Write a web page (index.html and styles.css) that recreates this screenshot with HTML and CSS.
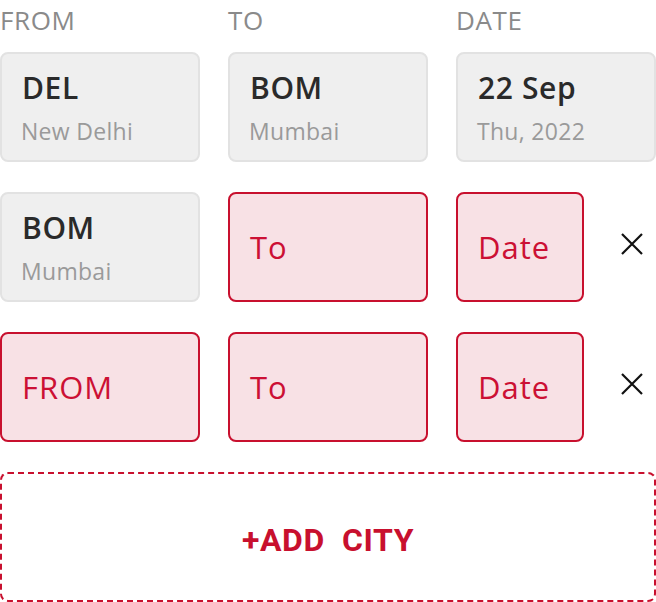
FILE: index.html
```html
<!DOCTYPE html>
<html lang="en">
<head>
    <meta charset="UTF-8">
    <meta name="viewport" content="width=device-width, initial-scale=1.0">
    <title>Multi City Search</title>
    <link rel="stylesheet" href="styles.css">
</head>
<body>

    <div class="trip">
        <div class="labels">
            <span>FROM</span>
            <span>TO</span>
            <span>DATE</span>
        </div>

        <div class="leg">
            <div class="field filled">
                <div class="code">DEL</div>
                <div class="sub">New Delhi</div>
            </div>
            <div class="field filled">
                <div class="code">BOM</div>
                <div class="sub">Mumbai</div>
            </div>
            <div class="field filled">
                <div class="code">22 Sep</div>
                <div class="sub">Thu, 2022</div>
            </div>
        </div>

        <div class="leg">
            <div class="field filled">
                <div class="code">BOM</div>
                <div class="sub">Mumbai</div>
            </div>
            <div class="field empty">To</div>
            <div class="date-cell">
                <div class="field empty date">Date</div>
                <button class="remove" aria-label="Remove">
                    <svg width="22" height="22" viewBox="0 0 22 22"><path d="M1 1L21 21M21 1L1 21" stroke="#111" stroke-width="2.2" fill="none"/></svg>
                </button>
            </div>
        </div>

        <div class="leg">
            <div class="field empty">FROM</div>
            <div class="field empty">To</div>
            <div class="date-cell">
                <div class="field empty date">Date</div>
                <button class="remove" aria-label="Remove">
                    <svg width="22" height="22" viewBox="0 0 22 22"><path d="M1 1L21 21M21 1L1 21" stroke="#111" stroke-width="2.2" fill="none"/></svg>
                </button>
            </div>
        </div>

        <button class="add-city">+ADD&nbsp; CITY</button>
    </div>

</body>
</html>
```

FILE: styles.css
```css
body {
    font-family: "Open Sans", Arial, sans-serif;
    background-color: #ffffff;
    margin: 0;
}
.trip {
    width: 656px;
}
.labels {
    display: grid;
    grid-template-columns: 200px 200px 200px;
    column-gap: 28px;
    height: 42px;
    margin-bottom: 10px;
    font-size: 26px;
    letter-spacing: 0.6px;
    color: #8a8a8a;
    line-height: 40px;
}
.leg {
    display: grid;
    grid-template-columns: 200px 200px 200px;
    column-gap: 28px;
    margin-bottom: 30px;
}
.field {
    box-sizing: border-box;
    height: 110px;
    border-radius: 8px;
    border: 2px solid #e2e2e2;
    background-color: #efefef;
    padding: 15px 20px 0;
}
.code {
    font-size: 30px;
    font-weight: 600;
    letter-spacing: 0.6px;
    color: #2a2a2a;
    line-height: 38px;
}
.sub {
    font-size: 23px;
    letter-spacing: 0.3px;
    color: #9a9a9a;
    margin-top: 8px;
    margin-left: -1px;
    line-height: 32px;
}
.empty {
    display: flex;
    align-items: center;
    padding-top: 0;
    border-color: #c8102e;
    background-color: #f8e1e5;
    color: #cc1034;
    font-size: 31px;
    font-weight: 500;
    letter-spacing: 1px;
}
.date-cell {
    display: flex;
    align-items: center;
}
.date {
    width: 128px;
}
.remove {
    background: none;
    border: none;
    padding: 0;
    margin-left: 37px;
    margin-bottom: 6px;
    width: 22px;
    height: 22px;
    cursor: pointer;
}
.add-city {
    display: block;
    box-sizing: border-box;
    width: 656px;
    height: 130px;
    padding-top: 6px;
    border: 2px dashed #c8102e;
    border-radius: 8px;
    background: #ffffff;
    color: #c8102e;
    font-family: Roboto, Arial, sans-serif;
    font-weight: 700;
    font-size: 32px;
    letter-spacing: 0.6px;
    cursor: pointer;
}
```
